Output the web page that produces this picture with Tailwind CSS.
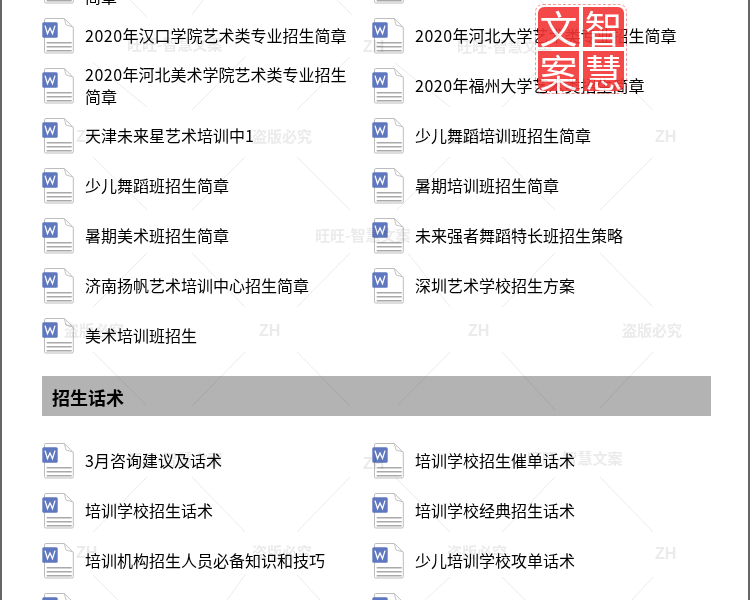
<!DOCTYPE html>
<html lang="zh">
<head>
<meta charset="utf-8">
<script src="https://cdn.jsdelivr.net/npm/@tailwindcss/browser@4"></script>
</head>
<body class="bg-white">
<svg width="0" height="0" class="absolute">
  <symbol id="doc" viewBox="0 0 32 36">
    <path d="M3.8 .5H22.3L31.3 9.5V33.8Q31.3 35 30 35H3.8Q2.5 35 2.5 33.8V1.8Q2.5 .5 3.8 .5Z" fill="#fff" stroke="#bdbdbd"/>
    <path d="M22.3 .5L24 7L31.3 9" fill="none" stroke="#c4c4c4"/>
    <path d="M4.7 24.7H29.7M4.7 28.7H29.7M4.7 32.7H29.7" stroke="#a9a9a9" stroke-width="1.5"/>
    <rect x=".3" y="4.3" width="15.4" height="15.4" rx="1.5" fill="#5f77be"/>
    <path d="M3 7.6L5.5 15.6L8 10L10.5 15.6L13 7.6" fill="none" stroke="#fff" stroke-width="1.3"/>
  </symbol>
</svg>
<div class="relative w-[750px] h-[600px] overflow-hidden border-x-2 border-[#666] bg-white text-black text-[16px] leading-[22px] font-['Noto_Sans_CJK_SC','Noto_Sans',sans-serif]">
  <div class="pl-[40px] pr-[37px] -mt-[39px]">
    <div class="grid grid-cols-[330px_1fr]">
      <div class="flex items-center h-[50px]"><svg class="w-[32px] h-[36px] mr-[11px] shrink-0"><use href="#doc"/></svg><span class="w-[275px] pb-[2px]">&nbsp;<br>简章</span></div>
      <div class="flex items-center h-[50px]"><svg class="w-[32px] h-[36px] mr-[11px] shrink-0"><use href="#doc"/></svg></div>
      <div class="flex items-center h-[50px]"><svg class="w-[32px] h-[36px] mr-[11px] shrink-0"><use href="#doc"/></svg><span class="w-[275px] pb-[2px]"><span class="tracking-[0.5px]">2020</span>年汉口学院艺术类专业招生简章</span></div>
      <div class="flex items-center h-[50px]"><svg class="w-[32px] h-[36px] mr-[11px] shrink-0"><use href="#doc"/></svg><span class="w-[275px] pb-[2px]"><span class="tracking-[0.5px]">2020</span>年河北大学艺术类专业招生简章</span></div>
      <div class="flex items-center h-[50px]"><svg class="w-[32px] h-[36px] mr-[11px] shrink-0"><use href="#doc"/></svg><span class="w-[275px] pb-[2px]"><span class="tracking-[0.5px]">2020</span>年河北美术学院艺术类专业招生简章</span></div>
      <div class="flex items-center h-[50px]"><svg class="w-[32px] h-[36px] mr-[11px] shrink-0"><use href="#doc"/></svg><span class="w-[275px] pb-[2px]"><span class="tracking-[0.5px]">2020</span>年福州大学艺术类招生简章</span></div>
      <div class="flex items-center h-[50px]"><svg class="w-[32px] h-[36px] mr-[11px] shrink-0"><use href="#doc"/></svg><span class="w-[275px] pb-[2px]">天津未来星艺术培训中1</span></div>
      <div class="flex items-center h-[50px]"><svg class="w-[32px] h-[36px] mr-[11px] shrink-0"><use href="#doc"/></svg><span class="w-[275px] pb-[2px]">少儿舞蹈培训班招生简章</span></div>
      <div class="flex items-center h-[50px]"><svg class="w-[32px] h-[36px] mr-[11px] shrink-0"><use href="#doc"/></svg><span class="w-[275px] pb-[2px]">少儿舞蹈班招生简章</span></div>
      <div class="flex items-center h-[50px]"><svg class="w-[32px] h-[36px] mr-[11px] shrink-0"><use href="#doc"/></svg><span class="w-[275px] pb-[2px]">暑期培训班招生简章</span></div>
      <div class="flex items-center h-[50px]"><svg class="w-[32px] h-[36px] mr-[11px] shrink-0"><use href="#doc"/></svg><span class="w-[275px] pb-[2px]">暑期美术班招生简章</span></div>
      <div class="flex items-center h-[50px]"><svg class="w-[32px] h-[36px] mr-[11px] shrink-0"><use href="#doc"/></svg><span class="w-[275px] pb-[2px]">未来强者舞蹈特长班招生策略</span></div>
      <div class="flex items-center h-[50px]"><svg class="w-[32px] h-[36px] mr-[11px] shrink-0"><use href="#doc"/></svg><span class="w-[275px] pb-[2px]">济南扬帆艺术培训中心招生简章</span></div>
      <div class="flex items-center h-[50px]"><svg class="w-[32px] h-[36px] mr-[11px] shrink-0"><use href="#doc"/></svg><span class="w-[275px] pb-[2px]">深圳艺术学校招生方案</span></div>
      <div class="flex items-center h-[50px]"><svg class="w-[32px] h-[36px] mr-[11px] shrink-0"><use href="#doc"/></svg><span class="w-[275px] pb-[2px]">美术培训班招生</span></div>
    </div>
    <h2 class="mt-[15px] mb-[20px] h-[40px] w-[669px] flex items-center pl-[10px] pt-[2px] bg-[#b3b3b3] text-[18px] font-bold">招生话术</h2>
    <div class="grid grid-cols-[330px_1fr]">
      <div class="flex items-center h-[50px]"><svg class="w-[32px] h-[36px] mr-[11px] shrink-0"><use href="#doc"/></svg><span class="w-[275px] pb-[2px]">3月咨询建议及话术</span></div>
      <div class="flex items-center h-[50px]"><svg class="w-[32px] h-[36px] mr-[11px] shrink-0"><use href="#doc"/></svg><span class="w-[275px] pb-[2px]">培训学校招生催单话术</span></div>
      <div class="flex items-center h-[50px]"><svg class="w-[32px] h-[36px] mr-[11px] shrink-0"><use href="#doc"/></svg><span class="w-[275px] pb-[2px]">培训学校招生话术</span></div>
      <div class="flex items-center h-[50px]"><svg class="w-[32px] h-[36px] mr-[11px] shrink-0"><use href="#doc"/></svg><span class="w-[275px] pb-[2px]">培训学校经典招生话术</span></div>
      <div class="flex items-center h-[50px]"><svg class="w-[32px] h-[36px] mr-[11px] shrink-0"><use href="#doc"/></svg><span class="w-[275px] pb-[2px]">培训机构招生人员必备知识和技巧</span></div>
      <div class="flex items-center h-[50px]"><svg class="w-[32px] h-[36px] mr-[11px] shrink-0"><use href="#doc"/></svg><span class="w-[275px] pb-[2px]">少儿培训学校攻单话术</span></div>
      <div class="flex items-center h-[50px]"><svg class="w-[32px] h-[36px] mr-[11px] shrink-0"><use href="#doc"/></svg></div>
      <div class="flex items-center h-[50px]"><svg class="w-[32px] h-[36px] mr-[11px] shrink-0"><use href="#doc"/></svg></div>
    </div>
  </div>

  <!-- watermark layer: page coordinates are shifted by the 2px left border -->
  <svg class="absolute -left-[2px] top-0 w-[750px] h-[600px] mix-blend-multiply pointer-events-none" viewBox="0 0 750 600" fill="#ebebeb" font-family="'Noto Sans CJK SC',sans-serif" font-size="15" font-weight="700">
    <g stroke="#ececec" stroke-width="1" fill="none">
      <path d="M130 0L147 17M203 0L192 15M337 0L352 15M540 0L555 15M615 0L600 15"/>
      <path d="M395 63L450 107M502 107L555 53M600 57L653 110M93 63L147 107M245 57L192 110M297 110L350 57"/>
      <path d="M93 157L147 210M245 157L192 210M297 157L350 210M450 157L397 210M502 157L555 210M653 157L600 210"/>
      <path d="M147 253L93 307M192 253L245 307M350 253L297 307M408 253L450 307M555 253L502 307M600 253L653 307"/>
      <path d="M93 352L147 406M245 352L192 406M297 352L350 406M450 352L397 406M502 352L555 410M653 352L600 408"/>
      <path d="M147 477L93 532M192 477L245 532M350 477L297 532M395 477L450 532M555 477L502 532M600 477L653 532"/>
      <path d="M93 575L118 600M245 575L227 600M297 575L320 600M450 577L425 600M502 577L525 600M653 577L632 600"/>
    </g>
    <text x="127" y="50">旺旺-智慧文案</text>
    <text x="457" y="52">旺旺-智慧文案</text>
    <text x="363" y="52" font-family="'Liberation Sans',sans-serif" font-size="16">ZH</text>
    <text x="76" y="142" font-family="'Liberation Sans',sans-serif" font-size="16">ZH</text>
    <text x="252" y="142">盗版必究</text>
    <text x="447" y="142">盗版必究</text>
    <text x="655" y="142" font-family="'Liberation Sans',sans-serif" font-size="16">ZH</text>
    <text x="315" y="241">旺旺-智慧文案</text>
    <text x="64" y="336">盗版必究</text>
    <text x="259" y="336" font-family="'Liberation Sans',sans-serif" font-size="16">ZH</text>
    <text x="468" y="336" font-family="'Liberation Sans',sans-serif" font-size="16">ZH</text>
    <text x="622" y="336">盗版必究</text>
    <text x="127" y="465">旺旺-智慧文案</text>
    <text x="527" y="464">旺旺-智慧文案</text>
    <text x="363" y="469" font-family="'Liberation Sans',sans-serif" font-size="16">ZH</text>
    <text x="76" y="558" font-family="'Liberation Sans',sans-serif" font-size="16">ZH</text>
    <text x="252" y="558">盗版必究</text>
    <text x="447" y="558">盗版必究</text>
    <text x="655" y="559" font-family="'Liberation Sans',sans-serif" font-size="16">ZH</text>
  </svg>

  <!-- red seal -->
  <div class="absolute left-[533px] top-[4px] w-[92px] h-[90px] p-[2px] rounded-[8px] border border-dashed border-[#f04545]/60 grid grid-cols-2 gap-[4px] opacity-90 text-white text-[38px] leading-none">
    <div class="bg-[#f33636] rounded-tl-[6px] flex items-center justify-center">文</div>
    <div class="bg-[#f33636] rounded-tr-[6px] flex items-center justify-center">智</div>
    <div class="bg-[#f33636] rounded-bl-[6px] flex items-center justify-center">案</div>
    <div class="bg-[#f33636] rounded-br-[6px] flex items-center justify-center">慧</div>
  </div>
</div>
</body>
</html>
